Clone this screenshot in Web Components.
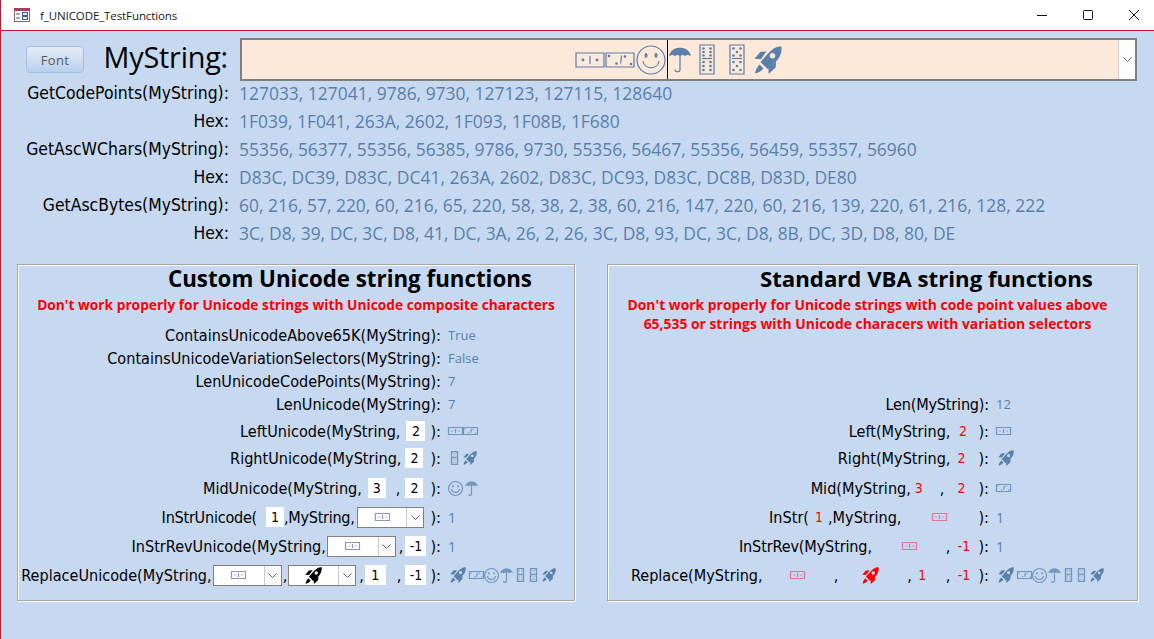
<!DOCTYPE html>
<html>
<head>
<meta charset="utf-8">
<title>f_UNICODE_TestFunctions</title>
<style>
    html, body { margin: 0; padding: 0; background: #c6d9f1; overflow: hidden; }
</style>
</head>
<body>
<ui-window>
    <ui-titlebar slot="title">f_UNICODE_TestFunctions</ui-titlebar>

    <ui-header>
        <ui-button slot="button">Font</ui-button>
        <span slot="label">MyString:</span>
        <ui-glyph name="tile1" h="16"></ui-glyph>
        <ui-glyph name="tile2" h="16"></ui-glyph>
        <ui-glyph name="smile" h="30" style="margin-left:1px"></ui-glyph>
        <i style="align-self:stretch;width:1px;background:#000;margin-left:1px"></i>
        <ui-glyph name="umbrella" h="26" style="margin-left:1px"></ui-glyph>
        <ui-glyph name="tile6" h="31" style="margin-left:8px"></ui-glyph>
        <ui-glyph name="tile5" h="31" style="margin-left:14px"></ui-glyph>
        <ui-glyph name="rocket" h="28" style="margin-left:9px"></ui-glyph>
    </ui-header>

    <ui-readouts>
        <ui-readout label="GetCodePoints(MyString):">127033, 127041, 9786, 9730, 127123, 127115, 128640</ui-readout>
        <ui-readout label="Hex:">1F039, 1F041, 263A, 2602, 1F093, 1F08B, 1F680</ui-readout>
        <ui-readout label="GetAscWChars(MyString):">55356, 56377, 55356, 56385, 9786, 9730, 55356, 56467, 55356, 56459, 55357, 56960</ui-readout>
        <ui-readout label="Hex:">D83C, DC39, D83C, DC41, 263A, 2602, D83C, DC93, D83C, DC8B, D83D, DE80</ui-readout>
        <ui-readout label="GetAscBytes(MyString):">60, 216, 57, 220, 60, 216, 65, 220, 58, 38, 2, 38, 60, 216, 147, 220, 60, 216, 139, 220, 61, 216, 128, 222</ui-readout>
        <ui-readout label="Hex:">3C, D8, 39, DC, 3C, D8, 41, DC, 3A, 26, 2, 26, 3C, D8, 93, DC, 3C, D8, 8B, DC, 3D, D8, 80, DE</ui-readout>
    </ui-readouts>

    <ui-panels>
        <ui-panel heading="Custom Unicode string functions" indent="150" style="--w:558px;--label:423px">
            <span slot="note">Don't work properly for Unicode strings with Unicode composite characters</span>

            <ui-row><span>ContainsUnicodeAbove65K(MyString):</span><ui-value slot="value" small>True</ui-value></ui-row>
            <ui-row gap="1"><span>ContainsUnicodeVariationSelectors(MyString):</span><ui-value slot="value" small>False</ui-value></ui-row>
            <ui-row gap="1"><span>LenUnicodeCodePoints(MyString):</span><ui-value slot="value" small>7</ui-value></ui-row>
            <ui-row gap="1"><span>LenUnicode(MyString):</span><ui-value slot="value" small>7</ui-value></ui-row>
            <ui-row gap="5"><span>LeftUnicode(MyString,</span><ui-box w="19" style="margin:0 5px 0 6px">2</ui-box><span>):</span>
                <ui-value slot="value"><ui-glyph name="tile1" h="8" faint></ui-glyph><ui-glyph name="tile2" h="8" faint></ui-glyph></ui-value></ui-row>
            <ui-row gap="5"><span>RightUnicode(MyString,</span><ui-box w="18" style="margin:0 7px 0 4px">2</ui-box><span>):</span>
                <ui-value slot="value"><ui-glyph name="tile5" h="14" faint style="margin:0 5px 0 3px"></ui-glyph><ui-glyph name="rocket" h="14"></ui-glyph></ui-value></ui-row>
            <ui-row gap="8"><span>MidUnicode(MyString,</span><ui-box w="18" style="margin:0 10px 0 6px">3</ui-box><span>,</span><ui-box w="18" style="margin:0 7px 0 5px">2</ui-box><span>):</span>
                <ui-value slot="value"><ui-glyph name="smile" h="15" faint></ui-glyph><ui-glyph name="umbrella" h="15" faint style="margin-left:2px"></ui-glyph></ui-value></ui-row>
            <ui-row gap="7"><span style="letter-spacing:-.25px">InStrUnicode(</span><ui-box w="18" style="margin:0 0 0 9px">1</ui-box><span style="letter-spacing:-.3px">,MyString,</span><ui-combo w="67" style="margin:0 6px 0 3px"><ui-glyph name="tile1" h="8" tint="#8d93c9"></ui-glyph></ui-combo><span>):</span>
                <ui-value slot="value" num>1</ui-value></ui-row>
            <ui-row gap="7"><span>InStrRevUnicode(MyString,</span><ui-combo w="69" style="margin:0 3px 0 1px"><ui-glyph name="tile1" h="8" tint="#8d93c9"></ui-glyph></ui-combo><span>,</span><ui-box w="21" style="margin:0 4px 0 2px">-1</ui-box><span>):</span>
                <ui-value slot="value" num>1</ui-value></ui-row>
            <ui-row gap="7"><span>ReplaceUnicode(MyString,</span><ui-combo w="69" style="margin:0 1px 0 1px"><ui-glyph name="tile1" h="8" tint="#8d93c9"></ui-glyph></ui-combo><span>,</span><ui-combo w="68" style="margin:0 3px 0 1px"><ui-glyph name="rocket" h="17" tint="#000"></ui-glyph></ui-combo><span>,</span><ui-box w="21" style="margin:0 11px 0 1px">1</ui-box><span>,</span><ui-box w="21" style="margin:0 4px 0 4px">-1</ui-box><span>):</span>
                <ui-value slot="value"><ui-glyph name="rocket" h="16" style="margin-left:2px"></ui-glyph><ui-glyph name="tile2" h="8" faint style="margin-left:3px"></ui-glyph><ui-glyph name="smile" h="15" faint></ui-glyph><ui-glyph name="umbrella" h="15" faint style="margin-left:1px"></ui-glyph><ui-glyph name="tile6" h="14" faint style="margin-left:4px"></ui-glyph><ui-glyph name="tile5" h="14" faint style="margin-left:6px"></ui-glyph><ui-glyph name="rocket" h="14" style="margin-left:5px"></ui-glyph></ui-value></ui-row>
        </ui-panel>

        <ui-panel heading="Standard VBA string functions" indent="152" two style="--w:531px;--label:381px">
            <span slot="note">Don't work properly for Unicode strings with code point values above<br>65,535 or strings with Unicode characers with variation selectors</span>

            <ui-row style="margin-top:69px"><span style="letter-spacing:-.2px">Len(MyString):</span><ui-value slot="value" small>12</ui-value></ui-row>
            <ui-row gap="5"><span>Left(MyString,</span><ui-box plain w="19" style="margin:0 6px 0 3px">2</ui-box><span>):</span>
                <ui-value slot="value"><ui-glyph name="tile1" h="8" faint></ui-glyph></ui-value></ui-row>
            <ui-row gap="5"><span>Right(MyString,</span><ui-box plain w="18" style="margin:0 8px 0 2px">2</ui-box><span>):</span>
                <ui-value slot="value"><ui-glyph name="rocket" h="16" style="margin-left:2px"></ui-glyph></ui-value></ui-row>
            <ui-row gap="8"><span>Mid(MyString,</span><ui-box plain w="18" style="margin:0 12px 0 -1px">3</ui-box><span>,</span><ui-box plain w="18" style="margin:0 8px 0 8px">2</ui-box><span>):</span>
                <ui-value slot="value"><ui-glyph name="tile2" h="8" faint></ui-glyph></ui-value></ui-row>
            <ui-row gap="7"><span>InStr(</span><ui-box plain w="18" style="margin:0 0 0 1px">1</ui-box><span>,MyString,</span><ui-combo plain w="60" style="margin:0 9px 0 8px"><ui-glyph name="tile1" h="8" tint="#e8749a"></ui-glyph></ui-combo><span>):</span>
                <ui-value slot="value" num>1</ui-value></ui-row>
            <ui-row gap="7"><span style="letter-spacing:-.15px">InStrRev(MyString,</span><ui-combo plain w="60" style="margin:0 6px 0 8px"><ui-glyph name="tile1" h="8" tint="#e8749a"></ui-glyph></ui-combo><span>,</span><ui-box plain w="21" style="margin:0 4px 0 3px">-1</ui-box><span>):</span>
                <ui-value slot="value" num>1</ui-value></ui-row>
            <ui-row gap="7"><span>Replace(MyString,</span><ui-combo plain w="60" style="margin:0 6px 0 5px"><ui-glyph name="tile1" h="8" tint="#e8749a"></ui-glyph></ui-combo><span>,</span><ui-combo plain w="60" style="margin:0 7px 0 2px"><ui-glyph name="rocket" h="17" tint="#f00"></ui-glyph></ui-combo><span>,</span><ui-box plain w="21" style="margin:0 13px 0 0">1</ui-box><span>,</span><ui-box plain w="21" style="margin:0 4px 0 3px">-1</ui-box><span>):</span>
                <ui-value slot="value"><ui-glyph name="rocket" h="16" style="margin-left:2px"></ui-glyph><ui-glyph name="tile2" h="8" faint style="margin-left:3px"></ui-glyph><ui-glyph name="smile" h="15" faint></ui-glyph><ui-glyph name="umbrella" h="15" faint style="margin-left:1px"></ui-glyph><ui-glyph name="tile6" h="14" faint style="margin-left:4px"></ui-glyph><ui-glyph name="tile5" h="14" faint style="margin-left:6px"></ui-glyph><ui-glyph name="rocket" h="14" style="margin-left:5px"></ui-glyph></ui-value></ui-row>
        </ui-panel>
    </ui-panels>
</ui-window>

<script>
const UI_FONT = '"DejaVu Sans Condensed", "DejaVu Sans", sans-serif';
const VALUE_COLOR = '#5a7fab';

function pips(list, r) {
    return list.map(([x, y]) => `<circle cx="${x}" cy="${y}" r="${r}" fill="currentColor" stroke="none"/>`).join('');
}

const LINE = 'fill="none" stroke="currentColor" stroke-width="1.2" vector-effect="non-scaling-stroke"';

// one drawing per code point of the test string
const GLYPHS = {
    tile1: { w: 30, h: 16, body: `<rect x="1" y="1" width="28" height="14" ${LINE}/>
        <path d="M15 4v8" ${LINE}/>${pips([[8, 8], [22, 8]], 1.4)}` },
    tile2: { w: 30, h: 16, body: `<rect x="1" y="1" width="28" height="14" ${LINE}/>
        <path d="M16.500 3.500l-.8 8" ${LINE}/>${pips([[4, 4], [11.500, 11.500], [20, 4.500], [26, 12]], 1.300)}` },
    smile: { w: 30, h: 30, body: `<circle cx="15" cy="15" r="14" ${LINE}/>
        <path d="M7 16c1 9 15 9 16 0" ${LINE}/>
        <ellipse cx="10" cy="10.5" rx="1.5" ry="2.4" fill="currentColor"/><ellipse cx="20" cy="10.5" rx="1.5" ry="2.4" fill="currentColor"/>` },
    umbrella: { w: 22, h: 26, body: `<path d="M0 9.5C1 3 6 .7 11 .7s10 2.300 11 8.800c-2-2-5-2-6 0-1-2-3.500-2-5 0-1.500-2-4-2-5 0-1-2-4-2-6 0z" fill="currentColor"/>
        <path d="M11 1v21.500c0 3-5 3-5 0" ${LINE}/>` },
    tile6: { w: 16, h: 31, body: `<rect x="1" y="1" width="14" height="29" ${LINE}/>
        <path d="M3 14.500h10" ${LINE}/>
        ${pips([[4.500, 4.500], [11.500, 4.500], [4.500, 8], [11.500, 8], [4.500, 11.500], [11.500, 11.500], [4.500, 18], [11.500, 18], [4.500, 22], [11.500, 22], [4.500, 26], [11.500, 26]], 1.300)}` },
    tile5: { w: 16, h: 31, body: `<rect x="1" y="1" width="14" height="29" ${LINE}/>
        <path d="M3 14.500h10" ${LINE}/>
        ${pips([[4.500, 4.500], [11.500, 4.500], [8, 8], [4.500, 11.500], [11.500, 11.500], [4.500, 18], [11.500, 18], [8, 22], [4.500, 26], [11.500, 26]], 1.300)}` },
    rocket: { w: 28, h: 28, body: `<path fill-rule="evenodd" fill="currentColor" d="M27.500.500c.6 6-1.500 11-5.500 15l-8.500 7.500-7-7 7.500-8.500C18 3.500 22 0 27.500.500zM18.500 7a2.800 2.800 0 1 0 .01 0z"/>
        <path fill="currentColor" d="M12.500 5.500l-6 .3-6 7 6.300.4zM22 15.500l-.3 6-7 6.300-.4-6.300zM5.500 18.500l4 4c-2 2.500-5 4.300-8.500 5 .5-3.500 2-6.500 4.500-9z"/>` }
};

class UiGlyph extends HTMLElement {
    connectedCallback() {
        const g = GLYPHS[this.getAttribute('name')];
        const h = Number(this.getAttribute('h'));
        const w = Math.round(g.w * h / g.h);
        const color = this.getAttribute('tint') || VALUE_COLOR;
        const faint = this.hasAttribute('faint') ? 0.75 : 1;
        this.attachShadow({ mode: 'open' }).innerHTML = `
            <style>
                :host { display: inline-flex; flex: none; color: ${color}; opacity: ${faint}; }
                svg { display: block; overflow: visible; }
            </style>
            <svg width="${w}" height="${h}" viewBox="0 0 ${g.w} ${g.h}">${g.body}</svg>`;
    }
}

class UiWindow extends HTMLElement {
    constructor() {
        super();
        this.attachShadow({ mode: 'open' }).innerHTML = `
            <style>
                :host {
                    display: flex;
                    flex-direction: column;
                    width: 1154px;
                    height: 639px;
                    box-sizing: border-box;
                    border-left: 1px solid #b81d32;
                    background: #c6d9f1;
                    font-family: ${UI_FONT};
                    color: #000;
                    overflow: hidden;
                }
            </style>
            <slot name="title"></slot>
            <slot></slot>`;
    }
}

class UiTitlebar extends HTMLElement {
    constructor() {
        super();
        this.attachShadow({ mode: 'open' }).innerHTML = `
            <style>
                :host {
                    display: flex;
                    align-items: center;
                    flex: none;
                    height: 30px;
                    background: #fff;
                    border-bottom: 1px solid #b81d32;
                    font: 11.500px "Open Sans", sans-serif;
                    color: #1a1a1a;
                }
                .doc { margin: 0 9px 0 13px; }
                .text { flex: 1; letter-spacing: -.1px; }
                .btn { width: 46px; display: flex; justify-content: center; }
                svg { display: block; }
            </style>
            <svg class="doc" width="17" height="15" viewBox="0 0 17 15">
                <rect x=".5" y=".5" width="15" height="13" fill="#fff" stroke="#6d6d86"/>
                <rect x="0" y="0" width="16" height="3" fill="#b03a5b"/>
                <path d="M2 6h4M2 10h4" stroke="#555" />
                <rect x="8.500" y="4.500" width="5" height="3" fill="#dfe6f5" stroke="#4a5a8c"/>
                <rect x="8.500" y="8.500" width="5" height="3" fill="#dfe6f5" stroke="#4a5a8c"/>
            </svg>
            <span class="text"><slot></slot></span>
            <span class="btn"><svg width="10" height="10" viewBox="0 0 10 10"><path d="M0 5.500h10" stroke="#111"/></svg></span>
            <span class="btn"><svg width="10" height="10" viewBox="0 0 10 10"><rect x=".5" y=".5" width="9" height="9" rx="1" fill="none" stroke="#111"/></svg></span>
            <span class="btn" style="margin-right:-3px"><svg width="10" height="10" viewBox="0 0 10 10"><path d="M0 0l10 10M10 0L0 10" stroke="#111"/></svg></span>`;
    }
}

class UiButton extends HTMLElement {
    constructor() {
        super();
        this.attachShadow({ mode: 'open' }).innerHTML = `
            <style>
                :host {
                    display: flex;
                    align-items: center;
                    justify-content: center;
                    box-sizing: border-box;
                    width: 58px;
                    height: 27px;
                    border: 1px solid #a5bfe0;
                    border-radius: 4px;
                    background: linear-gradient(#e4edf9, #b9cfeb);
                    font: 13px "Open Sans", sans-serif;
                    letter-spacing: .3px;
                    color: #595959;
                }
            </style>
            <slot></slot>`;
    }
}

class UiHeader extends HTMLElement {
    constructor() {
        super();
        this.attachShadow({ mode: 'open' }).innerHTML = `
            <style>
                :host {
                    display: grid;
                    grid-template-columns: 58px 156px 897px;
                    align-items: center;
                    padding: 7px 0 0 25px;
                    flex: none;
                }
                .label { font: 28.800px "Open Sans", sans-serif; padding-left: 19.500px; letter-spacing: -.2px; margin-top: -6px; }
                .field {
                    display: flex;
                    box-sizing: border-box;
                    height: 43px;
                    border: 2px solid #808080;
                    background: #fde9d9;
                }
                .text { flex: 1; display: flex; align-items: center; justify-content: center; padding-right: 4px; }
                .arrow {
                    flex: none;
                    width: 17px;
                    box-sizing: border-box;
                    border-left: 1px solid #ccc;
                    background: #fdfdfd;
                    display: flex;
                    align-items: center;
                    justify-content: center;
                }
            </style>
            <slot name="button"></slot>
            <div class="label"><slot name="label"></slot></div>
            <div class="field">
                <div class="text"><slot></slot></div>
                <div class="arrow"><svg width="9" height="5" viewBox="0 0 9 5"><path d="M.5.500l4 4 4-4" fill="none" stroke="#666"/></svg></div>
            </div>`;
    }
}

class UiReadouts extends HTMLElement {
    constructor() {
        super();
        this.attachShadow({ mode: 'open' }).innerHTML = `
            <style>
                :host { display: grid; grid-auto-rows: 28px; margin-top: -2px; flex: none; }
            </style>
            <slot></slot>`;
    }
}

class UiReadout extends HTMLElement {
    constructor() {
        super();
        this.attachShadow({ mode: 'open' });
    }

    connectedCallback() {
        this.shadowRoot.innerHTML = `
            <style>
                :host {
                    display: grid;
                    grid-template-columns: 228px 1fr;
                    column-gap: 10px;
                    align-items: center;
                    font-size: 17.400px;
                }
                .label { text-align: right; }
                .value { font: 17.450px "Open Sans", sans-serif; color: ${VALUE_COLOR}; }
            </style>
            <div class="label">${this.getAttribute('label')}</div>
            <div class="value"><slot></slot></div>`;
    }
}

class UiPanels extends HTMLElement {
    constructor() {
        super();
        this.attachShadow({ mode: 'open' }).innerHTML = `
            <style>
                :host { display: flex; gap: 32px; padding-left: 16px; margin-top: 17px; flex: none; }
            </style>
            <slot></slot>`;
    }
}

class UiPanel extends HTMLElement {
    constructor() {
        super();
        this.attachShadow({ mode: 'open' });
    }

    connectedCallback() {
        const two = this.hasAttribute('two');
        this.shadowRoot.innerHTML = `
            <style>
                :host {
                    display: flex;
                    flex-direction: column;
                    box-sizing: border-box;
                    width: var(--w);
                    height: 337px;
                    border: 1px solid #a6a6a6;
                    box-shadow: 1px 1px 0 #fff, inset 1px 1px 0 #fff;
                    flex: none;
                }
                h2 {
                    margin: 0;
                    height: 27px;
                    padding-left: ${this.getAttribute('indent')}px;
                    font: bold ${two ? 22.2 : 22.3}px/27px "Open Sans", sans-serif;
                    white-space: nowrap;
                }
                .note {
                    box-sizing: border-box;
                    height: 32px;
                    padding: 3px ${two ? 10 : 0}px 0 0;
                    text-align: center;
                    font: bold ${two ? 13.9 : 13.75}px/19px "Open Sans", sans-serif;
                    color: #f00;
                }
            </style>
            <h2>${this.getAttribute('heading')}</h2>
            <div class="note"><slot name="note"></slot></div>
            <slot></slot>`;
    }
}

class UiRow extends HTMLElement {
    constructor() {
        super();
        this.attachShadow({ mode: 'open' });
    }

    connectedCallback() {
        const gap = this.getAttribute('gap');
        this.shadowRoot.innerHTML = `
            <style>
                :host {
                    display: grid;
                    grid-template-columns: var(--label) 1fr;
                    column-gap: 7px;
                    height: 22px;
                    align-items: center;
                    font-size: 16.100px;
                    white-space: nowrap;
                    ${gap ? `margin-top: ${gap}px;` : ''}
                }
                .args { display: flex; justify-content: flex-end; align-items: center; }
            </style>
            <div class="args"><slot></slot></div>
            <slot name="value"></slot>`;
    }
}

class UiValue extends HTMLElement {
    constructor() {
        super();
        this.attachShadow({ mode: 'open' });
    }

    connectedCallback() {
        const size = this.hasAttribute('small') ? 13 : 14;
        this.shadowRoot.innerHTML = `
            <style>
                :host {
                    display: flex;
                    align-items: center;
                    font: ${size}px "Open Sans", sans-serif;
                    color: ${VALUE_COLOR};
                }
            </style>
            <slot></slot>`;
    }
}

class UiBox extends HTMLElement {
    constructor() {
        super();
        this.attachShadow({ mode: 'open' });
    }

    connectedCallback() {
        const plain = this.hasAttribute('plain');
        this.shadowRoot.innerHTML = `
            <style>
                :host {
                    display: flex;
                    align-items: center;
                    justify-content: center;
                    flex: none;
                    width: ${this.getAttribute('w')}px;
                    height: 20px;
                    font-size: 14px;
                    background: ${plain ? 'transparent' : '#fff'};
                    color: ${plain ? '#f00' : '#000'};
                }
            </style>
            <slot></slot>`;
    }
}

class UiCombo extends HTMLElement {
    constructor() {
        super();
        this.attachShadow({ mode: 'open' });
    }

    connectedCallback() {
        const plain = this.hasAttribute('plain');
        this.shadowRoot.innerHTML = `
            <style>
                :host {
                    display: flex;
                    flex: none;
                    box-sizing: border-box;
                    width: ${this.getAttribute('w')}px;
                    height: 21px;
                    ${plain ? '' : 'border: 1px solid #808080; background: #fff;'}
                }
                .text { flex: 1; display: flex; align-items: center; justify-content: center; }
                .arrow {
                    flex: none;
                    width: 17px;
                    box-sizing: border-box;
                    border-left: 1px solid #ccc;
                    background: #fafafa;
                    display: flex;
                    align-items: center;
                    justify-content: center;
                }
            </style>
            <div class="text"><slot></slot></div>
            ${plain ? '' : '<div class="arrow"><svg width="9" height="5" viewBox="0 0 9 5"><path d="M.5.500l4 4 4-4" fill="none" stroke="#666"/></svg></div>'}`;
    }
}

customElements.define('ui-glyph', UiGlyph);
customElements.define('ui-window', UiWindow);
customElements.define('ui-titlebar', UiTitlebar);
customElements.define('ui-button', UiButton);
customElements.define('ui-header', UiHeader);
customElements.define('ui-readouts', UiReadouts);
customElements.define('ui-readout', UiReadout);
customElements.define('ui-panels', UiPanels);
customElements.define('ui-panel', UiPanel);
customElements.define('ui-row', UiRow);
customElements.define('ui-value', UiValue);
customElements.define('ui-box', UiBox);
customElements.define('ui-combo', UiCombo);
</script>
</body>
</html>
